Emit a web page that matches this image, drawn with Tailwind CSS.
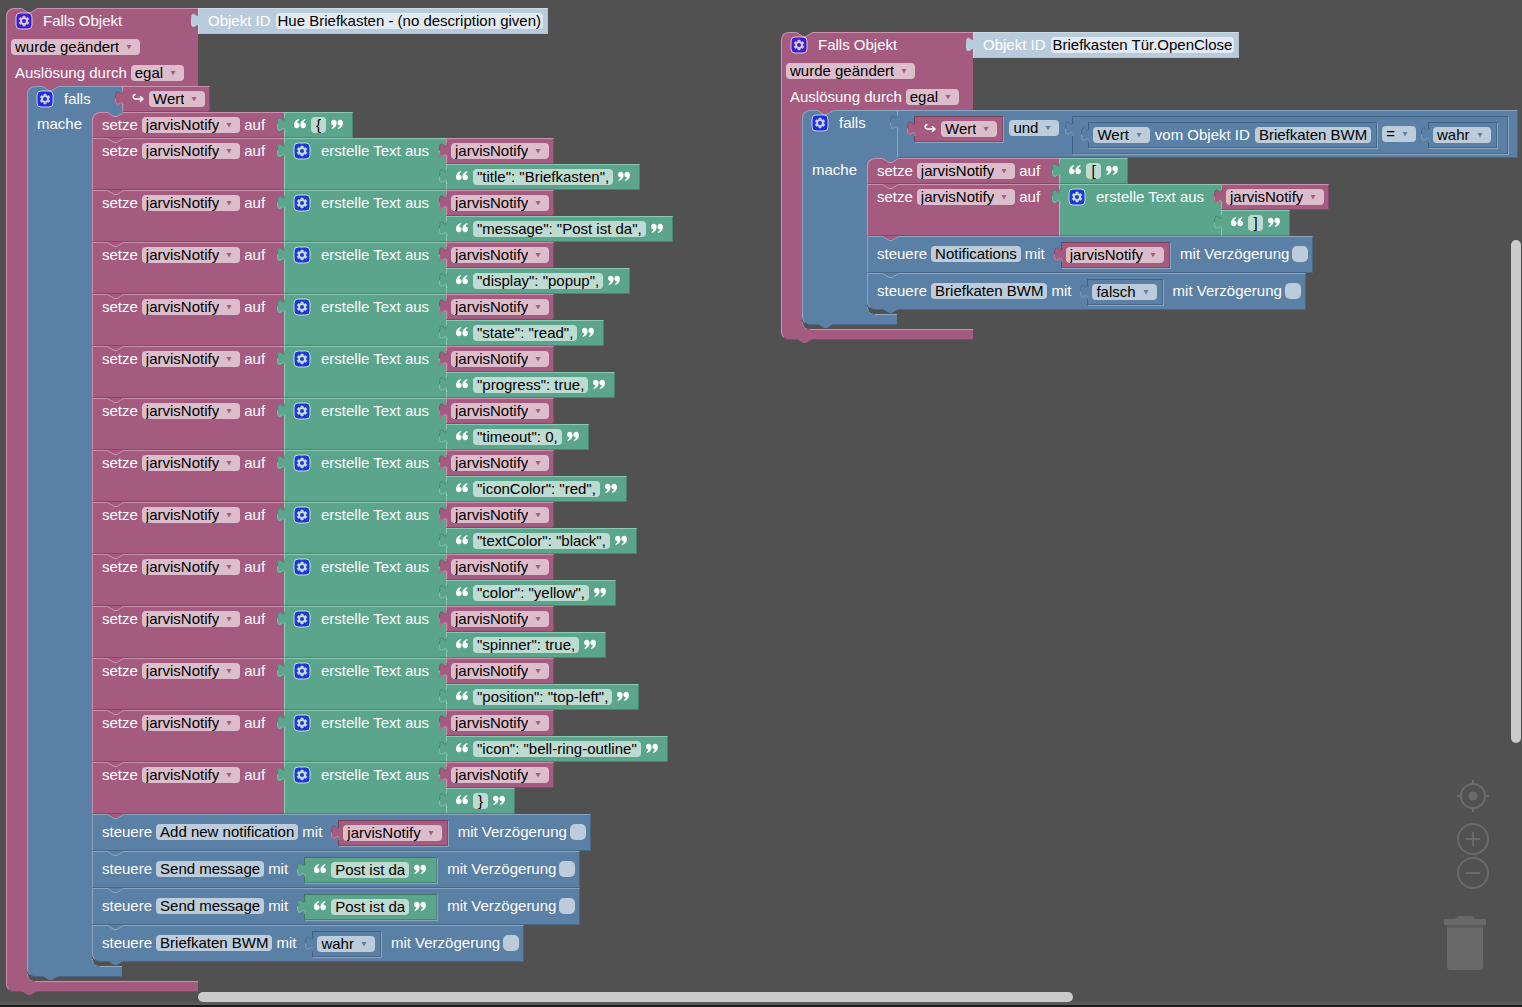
<!DOCTYPE html>
<html lang="de">
<head>
<meta charset="utf-8">
<title>Blockly – jarvisNotify</title>
<meta name="viewport" content="width=device-width, initial-scale=1">
<script src="https://cdn.jsdelivr.net/npm/@tailwindcss/browser@4"></script>
</head>
<body class="bg-[#515151]">
<main id="workspace" class="relative h-screen w-full overflow-hidden border-b-2 border-[#1c1c1c] bg-[#515151] text-[15px] leading-4 text-white" style="font-family:'Liberation Sans',Arial,sans-serif">
  <section id="stack-a" aria-label="Briefkasten Benachrichtigung" class="absolute left-[6px] top-[8px]"></section>
  <section id="stack-b" aria-label="Briefkasten Tür" class="absolute left-[781px] top-[32px]"></section>

  <nav aria-label="Zoom" class="absolute bottom-[115px] right-[32px] flex flex-col items-center text-[#6b6b6b]">
    <button type="button" aria-label="Zentrieren" class="mb-[9px] block size-[34px]">
      <svg viewBox="0 0 34 34" class="size-full" fill="none" stroke="currentColor" stroke-width="2"><circle cx="17" cy="17" r="12"/><circle cx="17" cy="17" r="4.500" fill="currentColor" stroke="none"/><path d="M17 1v4M17 29v4M1 17h4M29 17h4"/></svg>
    </button>
    <button type="button" aria-label="Vergrößern" class="block size-[34px]">
      <svg viewBox="0 0 34 34" class="size-full" fill="none" stroke="currentColor" stroke-width="2"><circle cx="17" cy="17" r="15"/><path d="M17 10v14M10 17h14"/></svg>
    </button>
    <button type="button" aria-label="Verkleinern" class="block size-[34px]">
      <svg viewBox="0 0 34 34" class="size-full" fill="none" stroke="currentColor" stroke-width="2"><circle cx="17" cy="17" r="15"/><path d="M10 17h14"/></svg>
    </button>
  </nav>
  <button type="button" aria-label="Papierkorb" class="absolute bottom-[34px] right-[36px] h-[55px] w-[42px]">
    <svg viewBox="0 0 42 55" class="size-full" fill="#696969"><path d="M0 3h11c1-1 2-3 4-3h12c2 0 3 2 4 3h11v6H0z"/><path fill="#5e5e5e" d="M3 9h36v3H3z"/><path d="M3 12h36v38c0 3-1 4-4 4H7c-3 0-4-1-4-4z"/></svg>
  </button>

  <div class="absolute bottom-0 left-0 h-[3px] w-full bg-[#595959]"></div>
  <div class="absolute bottom-[3px] left-[13%] h-[10px] w-[57.5%] rounded-full bg-[#cbcbcb]"></div>
  <div class="absolute right-[1px] top-[240px] h-1/2 w-[10px] rounded-full bg-[#cbcbcb]"></div>
</main>

<script>
const PINK = { bg:'bg-[#a55b80]', line:'border-t-[#c993ae] border-l-[#c993ae] border-b-[#84496a] border-r-[#84496a]', inline:'border-t-[#74405a] border-l-[#74405a] border-b-[#84496a] border-r-[#84496a]', field:'bg-[#dbbdcc]', fill:'#a55b80', hi:'#c993ae', dark:'#74405a' };
const BLUE = { bg:'bg-[#5b80a5]', line:'border-t-[#8ca6c0] border-l-[#8ca6c0] border-b-[#496684] border-r-[#496684]', inline:'border-t-[#40607f] border-l-[#40607f] border-b-[#496684] border-r-[#496684]', field:'bg-[#bdccdb]', fill:'#5b80a5', hi:'#8ca6c0', dark:'#40607f' };
const GREEN = { bg:'bg-[#5ba58c]', line:'border-t-[#8cc9b4] border-l-[#8cc9b4] border-b-[#498470] border-r-[#498470]', inline:'border-t-[#3f7462] border-l-[#3f7462] border-b-[#498470] border-r-[#498470]', field:'bg-[#bddbd1]', fill:'#5ba58c', hi:'#8cc9b4', dark:'#3f7462' };
const PALE = { bg:'bg-[#b8cbdc]', line:'border-t-[#cddae6] border-l-[#cddae6] border-b-[#b0c2d3] border-r-[#b0c2d3]', inline:'', field:'bg-[#e3eaf1]', fill:'#b8cbdc', hi:'#cddae6', dark:'#b8cbdc' };
const BACK = { fill:'#515151' };

// --- fields ---
const esc = s => s.replace(/"/g, '&quot;');
const label = (t, extra = '') => `<span class="whitespace-nowrap ${extra}">${t}</span>`;
const select = (c, t, name) => `<span class="relative inline-flex h-4 shrink-0 rounded-sm ${c.field}">
  <select aria-label="${name}" class="field-sizing-content -my-[2px] h-5 appearance-none bg-transparent py-0 pl-1 pr-[21px] leading-5 text-black"><option>${t}</option></select>
  <svg viewBox="0 0 6 5" class="pointer-events-none absolute right-2 top-[6px] h-[5px] w-[6px]" fill="${c.fill}"><path d="M.5 0h5L3 4.500z"/></svg></span>`;
const idField = (c, t, pad = 'px-1') => `<button type="button" class="h-4 shrink-0 whitespace-nowrap rounded-sm leading-4 text-black ${pad} ${c.field}">${t}</button>`;
const gear = () => `<button type="button" aria-label="Einstellungen" class="size-4 shrink-0"><svg viewBox="0 0 16 16" class="size-4 overflow-visible opacity-65"><rect width="16" height="16" rx="4" fill="#00f" stroke="#fff"/><path fill="#fff" stroke="#fff" stroke-width=".4" d="m4.203,7.296 0,1.368 -0.92,0.677 -0.11,0.41 0.9,1.559 0.41,0.11 1.043,-0.457 1.187,0.683 0.127,1.134 0.3,0.3 1.8,0 0.3,-0.299 0.127,-1.138 1.185,-0.682 1.046,0.458 0.409,-0.11 0.9,-1.559 -0.11,-0.41 -0.92,-0.677 0,-1.366 0.92,-0.677 0.11,-0.41 -0.9,-1.559 -0.409,-0.109 -1.046,0.458 -1.185,-0.682 -0.127,-1.138 -0.3,-0.299 -1.8,0 -0.3,0.3 -0.126,1.135 -1.187,0.682 -1.043,-0.457 -0.41,0.11 -0.899,1.559 0.108,0.409z"/><circle cx="8" cy="8" r="2" fill="#00f"/></svg></button>`;
const hook = () => `<svg viewBox="0 0 12 10" class="mt-[6px] h-[10px] w-3 shrink-0 self-start" fill="none" stroke="#fff" stroke-width="1.400"><path d="M3.500 1.500C.4 1.700.4 6 3.500 6H10.500M8 3.200l3 2.800-3 2.800"/></svg>`;
const quote = flip => `<svg viewBox="0 0 12 12" class="size-3 shrink-0" fill="#fff"><g${flip ? ' transform="rotate(180 6 5)"' : ''}><path d="M5.300 1C4 1.600 3.200 2.600 3.100 3.700 4.600 3.800 5.600 4.900 5.600 6.300 5.600 8 4.400 9.200 2.800 9.200 1.100 9.200 0 7.900 0 5.900 0 3.200 1.700.9 4.700 0z"/><path d="M11.700 1C10.400 1.600 9.600 2.600 9.500 3.700 11 3.800 12 4.900 12 6.300 12 8 10.800 9.200 9.200 9.200 7.500 9.200 6.400 7.900 6.400 5.900 6.400 3.200 8.100.9 11.100 0z"/></g></svg>`;

// --- connectors ---
const tab = c => `<svg viewBox="0 0 9 16" class="absolute -left-2 top-1 h-4 w-[9px]"><path fill="${c.fill}" d="M9 0H8C8 10 0-8 0 7.500S8 5 8 15h1z"/><path fill="none" stroke="${c.dark}" stroke-opacity=".6" d="M8 0C8 10 .5-8 .5 7.500"/><path fill="none" stroke="${c.hi}" stroke-opacity=".8" d="M.5 7.500C.5 21 8 5 8 15"/></svg>`;
const notch = (above, c) => `<svg viewBox="0 0 17 5" class="absolute left-[14px] -top-px h-[5px] w-[17px]"><path fill="${above.fill}" d="M0 0h17L10 4.500H7z"/><path fill="none" stroke="${c.hi}" d="M.5 .5l6.500 4h3l6.500-4"/></svg>`;
const nub = c => `<svg viewBox="0 0 15 4" class="absolute left-[15px] top-full h-1 w-[15px]" fill="${c.fill}"><path d="M0 0h15L9 4H6z"/></svg>`;

// --- value blocks ---
const joined = (c, html) => `<div class="relative flex h-[26px] items-center gap-[5px] self-start border px-1 pb-px ${c.bg} ${c.line}">${tab(c)}${html}</div>`;
const inline = (c, html, size = 'h-[26px] items-center pl-1 pr-[5px]') => `<div class="relative flex gap-[5px] border shadow-[1px_1px_0_0_#8ca6c0] ${size} ${c.bg} ${c.inline}">${tab(c)}${html}</div>`;
const textParts = t => `<span class="flex h-4 items-center gap-[5px] px-[5px]">${quote(false)}<span class="flex h-4 rounded-sm ${GREEN.field}"><input aria-label="Text" value="${esc(t)}" class="field-sizing-content -my-[2px] h-5 min-w-[15px] bg-transparent px-1 text-center leading-5 text-black"></span>${quote(true)}</span>`;
const text = t => joined(GREEN, textParts(t));
const variable = () => joined(PINK, select(PINK, 'jarvisNotify', 'Variable'));
const trigger = () => `<span class="ml-[5px] flex h-full">${hook()}</span>` + select(PINK, 'Wert', 'Eigenschaft');
const objectId = t => joined(PALE, label('Objekt ID', 'ml-[5px]') + idField(PALE, t, 'px-0.5'));
const joinText = t => `<div class="flex">
  <div class="relative flex h-[52px] w-[162px] items-start gap-[11px] border-y border-l pl-[9px] pt-1 ${GREEN.bg} ${GREEN.line}">${tab(GREEN)}${gear()}${label('erstelle Text aus')}</div>
  <div class="flex flex-col">${variable()}${text(t)}</div></div>`;

// --- statement blocks ---
const corner = (i, last) => (i === 0 ? ' rounded-tl-lg' : '') + (i === last ? ' rounded-bl-lg' : '');
const setVar = value => ({ c: PINK, draw: (above, round) => `<div class="flex">
  <div class="relative flex w-[192px] items-start gap-1 border-y border-l pl-[9px] pt-1 ${round} ${PINK.bg} ${PINK.line}">${notch(above, PINK)}${label('setze')}${select(PINK, 'jarvisNotify', 'Variable')}${label('auf')}</div>${value}</div>` });
const control = (target, value) => ({ c: BLUE, draw: (above, round, last) => `<div class="relative flex h-[37px] w-max items-center border pb-px pl-[9px] pr-1 ${round} ${BLUE.bg} ${BLUE.line}">${notch(above, BLUE)}${last ? nub(BLUE) : ''}
  ${label('steuere')}<span class="w-1"></span>${idField(BLUE, target)}<span class="w-1"></span>${label('mit')}<span class="w-4"></span><span class="mt-[2px]">${value}</span>
  <label class="ml-[10px] flex items-center gap-[3px] whitespace-nowrap">mit Verzögerung<input type="checkbox" class="size-4 appearance-none rounded-[5px] ${BLUE.field}"></label></div>` });

// Rounded inner corner where a bracket's arm meets its foot
const innerCorner = c => `<svg viewBox="0 0 8 8" class="absolute -bottom-px left-full size-2"><path fill="${c.fill}" d="M0 0v8h8C3 8 0 5 0 0z"/><path fill="none" stroke="${c.hi}" d="M.5 0C.5 5 3 7.500 8 7.500"/></svg>`;
// Bracket: arm on the left, statements inside, foot below
const bracket = (c, arm, foot, armHtml, inner, edge) => `<div class="flex"><div class="relative shrink-0 border-l ${arm} ${c.bg} ${c.line}">${armHtml}${innerCorner(c)}</div>
  <div class="relative pb-1"><span class="absolute left-0 top-0 size-2 ${c.bg}"></span><div class="relative flex flex-col">${inner}</div></div></div>
  <div class="relative h-[11px] rounded-bl-lg border-b border-l ${foot} ${c.bg} ${c.line}"><span class="absolute right-0 top-0 h-px bg-white/35 ${edge}"></span>${nub(c)}</div>`;

const stack = (list, parent) => list.map((b, i) => b.draw(i ? list[i - 1].c : parent, corner(i, list.length - 1), i === list.length - 1)).join('');
const ifBlock = (head, value, list) => `<div>
  <div class="flex"><div class="relative flex w-[95px] items-start gap-[11px] rounded-tl-lg border-l border-t pl-[9px] pt-1 ${head} ${BLUE.bg} ${BLUE.line}">${notch(PINK, BLUE)}${gear()}${label('falls')}</div>${value}</div>
  ${bracket(BLUE, 'w-[65px]', 'w-[95px]', `<span class="block pl-[9px] pt-1">mache</span>`, stack(list, BLUE), 'left-[72px]')}</div>`;
const eventBlock = (id, body) => `<div class="flex">
  <div class="relative flex h-[78px] w-[192px] flex-col gap-[10px] rounded-tl-lg border-l border-t pl-1 pt-1 ${PINK.bg} ${PINK.line}">${notch(BACK, PINK)}
    <div class="flex gap-[11px] pl-[5px]">${gear()}${label('Falls Objekt')}</div>
    <div class="flex">${select(PINK, 'wurde geändert', 'Bedingung')}</div>
    <div class="flex gap-1 pl-1">${label('Auslösung durch')}${select(PINK, 'egal', 'Auslöser')}</div>
  </div>${objectId(id)}</div>
  ${bracket(PINK, 'w-[21px]', 'w-[192px]', '', body, 'left-[28px]')}`;

const bool = t => inline(BLUE, select(BLUE, t, 'Wahrheitswert'));
const pinkVar = () => inline(PINK, select(PINK, 'jarvisNotify', 'Variable'));
const message = () => inline(GREEN, textParts('Post ist da'));

const entries = ['"title": "Briefkasten",', '"message": "Post ist da",', '"display": "popup",', '"state": "read",', '"progress": true,', '"timeout": 0,', '"iconColor": "red",', '"textColor": "black",', '"color": "yellow",', '"spinner": true,', '"position": "top-left",', '"icon": "bell-ring-outline"', '}'];

document.getElementById('stack-a').innerHTML = eventBlock('Hue Briefkasten - (no description given)',
  ifBlock('h-[26px]', joined(PINK, trigger()), [
    setVar(text('{')),
    ...entries.map(e => setVar(joinText(e))),
    control('Add new notification', pinkVar()),
    control('Send message', message()),
    control('Send message', message()),
    control('Briefkaten BWM', bool('wahr')),
  ]));

const compare = inline(BLUE,
  inline(BLUE, select(BLUE, 'Wert', 'Eigenschaft') + label('vom Objekt ID') + idField(BLUE, 'Briefkaten BWM')) +
  `<span class="flex pt-1">${select(BLUE, '=', 'Vergleich')}</span><span class="w-[2px]"></span>` + bool('wahr'),
  'h-[38px] items-start pl-[15px] pr-[10px] pt-[5px]');
const andBlock = `<div class="relative flex h-12 items-start gap-[6px] border pl-4 pr-[9px] pt-[5px] ${BLUE.bg} ${BLUE.line}">${tab(BLUE)}
  ${inline(PINK, trigger())}<span class="flex pt-1">${select(BLUE, 'und', 'Verknüpfung')}</span><span class="w-px"></span>${compare}</div>`;

document.getElementById('stack-b').innerHTML = eventBlock('Briefkasten Tür.OpenClose',
  ifBlock('h-12', andBlock, [
    setVar(text('[')),
    setVar(joinText(']')),
    control('Notifications', pinkVar()),
    control('Briefkaten BWM', bool('falsch')),
  ]));
</script>
</body>
</html>
